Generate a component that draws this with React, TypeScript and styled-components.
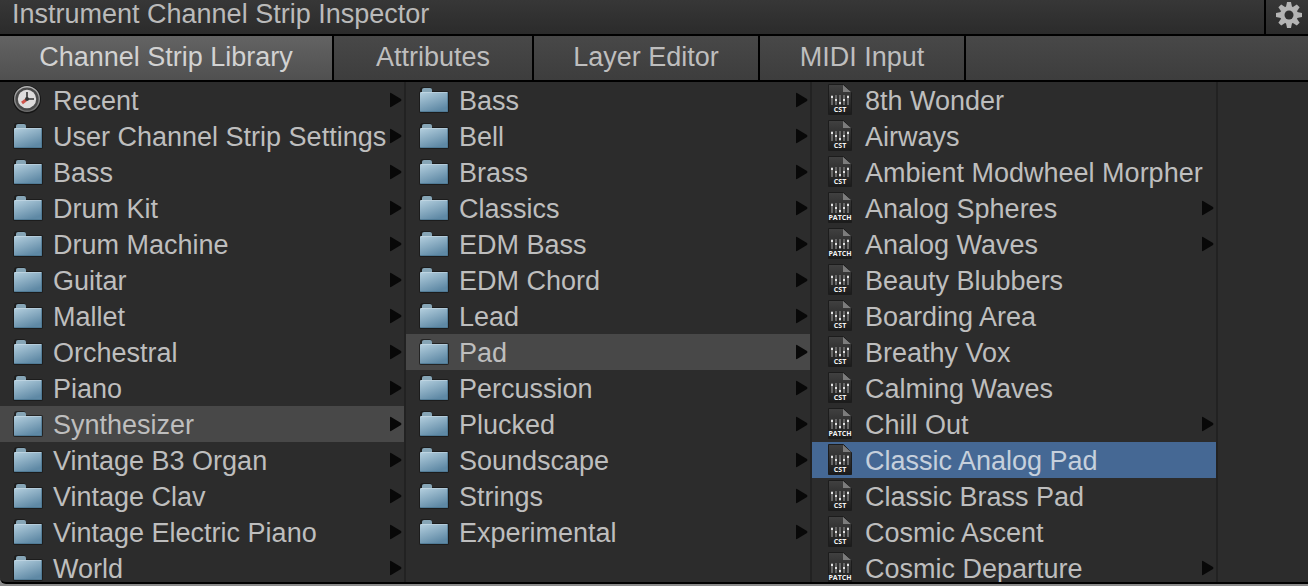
import React, { useState } from "react";
import styled, { createGlobalStyle, css } from "styled-components";

const GlobalStyle = createGlobalStyle`
  *, *::before, *::after { box-sizing: border-box; }
  html { background: #8a8a8a; }
  body {
    margin: 0;
    font-family: "Liberation Sans", Arial, sans-serif;
    font-size: 27px;
    color: #bebebe;
  }
  button {
    margin: 0;
    border: 0;
    background: none;
    color: inherit;
    font: inherit;
    text-align: left;
    cursor: default;
  }
`;

const Panel = styled.main`
  display: flex;
  flex-direction: column;
  height: calc(100vh - 2px);
  overflow: hidden;
  background: #2c2c2c;
  border-bottom: 2px solid #000;
  border-bottom-left-radius: 6px;
`;

const TitleBar = styled.header`
  display: flex;
  flex: none;
  height: 36px;
  border-bottom: 2px solid #000;
  background: linear-gradient(#373737, #2b2b2b);
`;

const Title = styled.h1`
  flex: 1;
  margin: 0;
  padding-left: 12px;
  font-size: 27px;
  font-weight: 400;
  line-height: 28px;
  color: #bababa;
`;

const GearButton = styled.button`
  display: flex;
  align-items: flex-start;
  width: 44px;
  padding: 1px 0 0 9px;
  border-left: 2px solid #000;
`;

const TabBar = styled.div`
  display: flex;
  flex: none;
  height: 46px;
  border-bottom: 2px solid #000;
  background: linear-gradient(#484848, #3d3d3d);
`;

const Tab = styled.button<{ $active: boolean; $width: number }>`
  min-width: ${(p) => p.$width}px;
  padding: 0 0 2px;
  border-right: 2px solid #000;
  line-height: 42px;
  text-align: center;
  white-space: nowrap;
  ${(p) =>
    p.$active &&
    css`
      background: linear-gradient(#636363, #505050);
      color: #d2d2d2;
    `}
`;

const Browser = styled.div`
  display: flex;
  flex: 1;
  min-height: 0;
`;

const Column = styled.ul`
  flex: 0 0 31.04%;
  min-width: 0;
  margin: 0;
  padding: 0;
  overflow: hidden;
  list-style: none;
  border-right: 2px solid #222;
`;

const Row = styled.button<{ $tone?: "path" | "selected" }>`
  display: flex;
  align-items: center;
  width: 100%;
  height: 36px;
  padding: 0 2px 0 12px;
  white-space: nowrap;
  ${(p) => p.$tone === "path" && css`background: #484848;`}
  ${(p) =>
    p.$tone === "selected" &&
    css`
      background: #456894;
      color: #c6d0dc;
    `}
`;

const IconSlot = styled.span`
  display: flex;
  flex: none;
  width: 41px;
`;

const Label = styled.span`
  flex: 1;
  line-height: 36px;
  padding-top: 1px;
`;

function Folder() {
  return (
    <svg width="32" height="32" viewBox="0 0 32 32" aria-hidden="true">
      <defs>
        <linearGradient id="folder-face" x1="0" y1="0" x2="0.5" y2="1">
          <stop offset="0" stopColor="#b5d0df" />
          <stop offset="1" stopColor="#5f89a5" />
        </linearGradient>
      </defs>
      <path d="M3 8V6q0-2 2-2h6q2 0 2 2v2h16q1 0 1 1v18q0 1-1 1H3q-1 0-1-1V9q0-1 1-1z" fill="none" stroke="#161616" strokeOpacity="0.7" strokeWidth="2" />
      <path d="M4 9V6q0-2 2-2h6q2 0 2 2v3z" fill="#86a5b6" />
      <rect x="2" y="8" width="28" height="20" rx="1" fill="url(#folder-face)" />
      <path d="M3 8.500h26" stroke="#cfe0ea" strokeOpacity="0.5" />
      <path d="M2.500 27.500h27V9" stroke="#456f8b" strokeOpacity="0.6" fill="none" />
    </svg>
  );
}

function Clock() {
  return (
    <svg width="32" height="32" viewBox="0 0 32 32" aria-hidden="true">
      <defs>
        <linearGradient id="clock-rim" x1="0" y1="0" x2="0" y2="1">
          <stop offset="0" stopColor="#b4b4b4" />
          <stop offset="1" stopColor="#6a6a6a" />
        </linearGradient>
      </defs>
      <circle cx="15" cy="15.500" r="14" fill="#151515" />
      <circle cx="15" cy="15" r="12.300" fill="#4a4a4a" stroke="url(#clock-rim)" strokeWidth="1.400" />
      <circle cx="15" cy="15" r="9.200" fill="#dedcdc" />
      <path d="M14 16l-4 3" stroke="#d0544c" strokeWidth="3" />
      <path d="M15 8v7h7" fill="none" stroke="#333" strokeWidth="1.600" />
      <circle cx="15" cy="15" r="2" fill="#333" />
    </svg>
  );
}

const TagText = styled.text`
  font-family: "Open Sans", sans-serif;
  font-size: 7px;
  font-weight: 700;
  fill: #f4f4f4;
`;

const KNOBS = [1, 4, 7, 4, 1];

function Document({ tag }: { tag: string }) {
  return (
    <svg width="32" height="34" viewBox="0 0 32 34" aria-hidden="true">
      <defs>
        <linearGradient id="page-face" x1="0" y1="0" x2="0" y2="1">
          <stop offset="0" stopColor="#414141" />
          <stop offset="1" stopColor="#1b1b1b" />
        </linearGradient>
      </defs>
      <path d="M4.500 1.500h15l8 8v22h-23z" fill="url(#page-face)" stroke="#1c1c1c" />
      <path d="M19 2v7h8z" fill="#7c7c7c" />
      {KNOBS.map((y, i) => (
        <g key={i}>
          <rect x={7 + i * 4} y="12" width="2" height="10" fill="#686868" />
          <rect x={7 + i * 4} y={12 + y} width="2" height="2" fill="#e2e2e2" />
        </g>
      ))}
      <TagText x="16" y="29" textAnchor="middle">{tag}</TagText>
    </svg>
  );
}

function Arrow() {
  return (
    <svg width="12" height="16" viewBox="0 0 12 16" aria-hidden="true">
      <path d="M0 1.500Q0 .5 1 1l10 6q1 1 0 2L1 15q-1 .5-1-.5z" fill="#080808" />
    </svg>
  );
}

function Gear() {
  return (
    <svg width="28" height="28" viewBox="-14 -14 28 28" aria-hidden="true">
      <g fill="#b4b4b4">
        {[0, 45, 90, 135, 180, 225, 270, 315].map((a) => (
          <path key={a} d="M-3-8L-2-13H2L3-8z" transform={`rotate(${a})`} />
        ))}
        <circle r="9" />
      </g>
      <circle r="4.500" fill="#303030" />
    </svg>
  );
}

const TABS = [
  { name: "Channel Strip Library", width: 334 },
  { name: "Attributes", width: 200 },
  { name: "Layer Editor", width: 226 },
  { name: "MIDI Input", width: 206 },
];

const CATEGORIES = [
  "Recent", "User Channel Strip Settings", "Bass", "Drum Kit", "Drum Machine", "Guitar", "Mallet",
  "Orchestral", "Piano", "Synthesizer", "Vintage B3 Organ", "Vintage Clav", "Vintage Electric Piano", "World",
];

const GROUPS = [
  "Bass", "Bell", "Brass", "Classics", "EDM Bass", "EDM Chord", "Lead", "Pad", "Percussion", "Plucked",
  "Soundscape", "Strings", "Experimental",
];

const SETTINGS = [
  "8th Wonder", "Airways", "Ambient Modwheel Morpher", "Analog Spheres", "Analog Waves", "Beauty Blubbers",
  "Boarding Area", "Breathy Vox", "Calming Waves", "Chill Out", "Classic Analog Pad", "Classic Brass Pad",
  "Cosmic Ascent", "Cosmic Departure",
];

const PATCHES = new Set(["Analog Spheres", "Analog Waves", "Chill Out", "Cosmic Departure"]);

export default function App() {
  const [tab, setTab] = useState(TABS[0].name);
  const [category, setCategory] = useState("Synthesizer");
  const [group, setGroup] = useState("Pad");
  const [setting, setSetting] = useState("Classic Analog Pad");

  return (
    <>
      <GlobalStyle />
      <Panel>
        <TitleBar>
          <Title>Instrument Channel Strip Inspector</Title>
          <GearButton aria-label="Settings"><Gear /></GearButton>
        </TitleBar>
        <TabBar role="tablist">
          {TABS.map(({ name, width }) => (
            <Tab
              key={name}
              role="tab"
              aria-selected={name === tab}
              $active={name === tab}
              $width={width}
              onClick={() => setTab(name)}
            >
              {name}
            </Tab>
          ))}
        </TabBar>
        <Browser>
          <Column>
            {CATEGORIES.map((name) => (
              <li key={name}>
                <Row $tone={name === category ? "path" : undefined} onClick={() => setCategory(name)}>
                  <IconSlot>{name === "Recent" ? <Clock /> : <Folder />}</IconSlot>
                  <Label>{name}</Label>
                  <Arrow />
                </Row>
              </li>
            ))}
          </Column>
          <Column>
            {GROUPS.map((name) => (
              <li key={name}>
                <Row $tone={name === group ? "path" : undefined} onClick={() => setGroup(name)}>
                  <IconSlot><Folder /></IconSlot>
                  <Label>{name}</Label>
                  <Arrow />
                </Row>
              </li>
            ))}
          </Column>
          <Column>
            {SETTINGS.map((name) => (
              <li key={name}>
                <Row $tone={name === setting ? "selected" : undefined} onClick={() => setSetting(name)}>
                  <IconSlot><Document tag={PATCHES.has(name) ? "PATCH" : "CST"} /></IconSlot>
                  <Label>{name}</Label>
                  {PATCHES.has(name) && <Arrow />}
                </Row>
              </li>
            ))}
          </Column>
        </Browser>
      </Panel>
    </>
  );
}
